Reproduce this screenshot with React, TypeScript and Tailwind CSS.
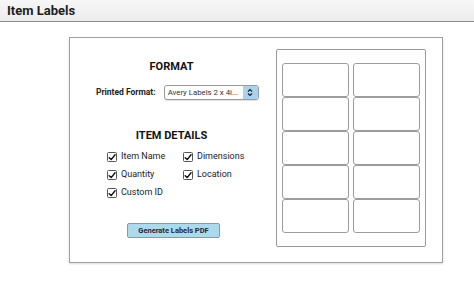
import React from "react";

const font = { fontFamily: "Roboto, 'Noto Sans', sans-serif" };

function Check({ label }: { label: string }) {
  return (
    <div className="flex h-[18px] items-center gap-[4px]">
      <span className="flex h-[10px] w-[10px] items-center justify-center rounded-[1.5px] border border-[#555] bg-white">
        <svg width="9" height="9" viewBox="0 0 10 10">
          <path
            d="M1.5 5.2 L4 7.6 L8.8 1.6"
            fill="none"
            stroke="#111"
            strokeWidth="1.8"
            strokeLinecap="round"
            strokeLinejoin="round"
          />
        </svg>
      </span>
      <span className="text-[9px] text-[#222]">{label}</span>
    </div>
  );
}

export default function App() {
  return (
    <div className="h-[287px] w-[474px] bg-white" style={font}>
      <header className="flex h-[22px] items-center border-b border-[#8a8a8a] bg-gradient-to-b from-[#f7f7f7] to-[#ececec] px-[7px]">
        <h1 className="text-[13px] font-bold text-[#1e1e1e]">Item Labels</h1>
      </header>

      <div className="ml-[69px] mt-[15px] flex h-[226px] w-[374px] border border-[#a0a0a0] shadow-[0_1px_2px_rgba(0,0,0,0.15)]">
        <div className="flex w-[203px] flex-col items-center pt-[22px]">
          <h2 className="text-[11px] font-bold leading-[13px] text-[#111]">FORMAT</h2>

          <div className="mt-[12px] flex items-center gap-[8px] self-start pl-[26px]">
            <span className="text-[8.5px] font-bold text-[#222]">Printed Format:</span>
            <div className="flex h-[15px] w-[95px] items-center overflow-hidden rounded-[3px] border border-[#9a9a9a] bg-white shadow-[0_1px_1px_rgba(0,0,0,0.12)]">
              <span className="flex-1 overflow-hidden whitespace-nowrap pl-[3px] text-[7.8px] text-[#333]">
                Avery Labels 2 x 4i...
              </span>
              <span className="flex h-full w-[15px] shrink-0 items-center justify-center bg-[#a8d2f0]">
                <svg width="6" height="9" viewBox="0 0 6 9">
                  <path d="M1 3.5 L3 1.5 L5 3.5 M1 5.5 L3 7.5 L5 5.5" fill="none" stroke="#222" strokeWidth="1.2" />
                </svg>
              </span>
            </div>
          </div>

          <h2 className="mt-[29px] text-[11px] font-bold leading-[13px] text-[#111]">ITEM DETAILS</h2>

          <div className="mt-[6px] grid grid-cols-[76px_auto] self-start pl-[37px]">
            <Check label="Item Name" />
            <Check label="Dimensions" />
            <Check label="Quantity" />
            <Check label="Location" />
            <Check label="Custom ID" />
          </div>

          <button className="ml-[4px] mt-[21px] flex h-[15px] w-[93px] items-center justify-center rounded-[2px] border border-[#8a9aa2] bg-[#acd9ec] text-[7.5px] font-bold text-[#1d2a33]">
            Generate Labels PDF
          </button>
        </div>

        <div className="ml-[3px] mt-[11px] h-[198px] w-[150px] rounded-[2px] border border-[#9a9a9a] pl-[5px] pt-[13px]">
          <div className="grid grid-cols-[67px_67px] gap-x-[4px]">
            {Array.from({ length: 10 }).map((_, i) => (
              <div key={i} className="h-[34px] rounded-[3px] border border-[#9c9c9c]" />
            ))}
          </div>
        </div>
      </div>
    </div>
  );
}
